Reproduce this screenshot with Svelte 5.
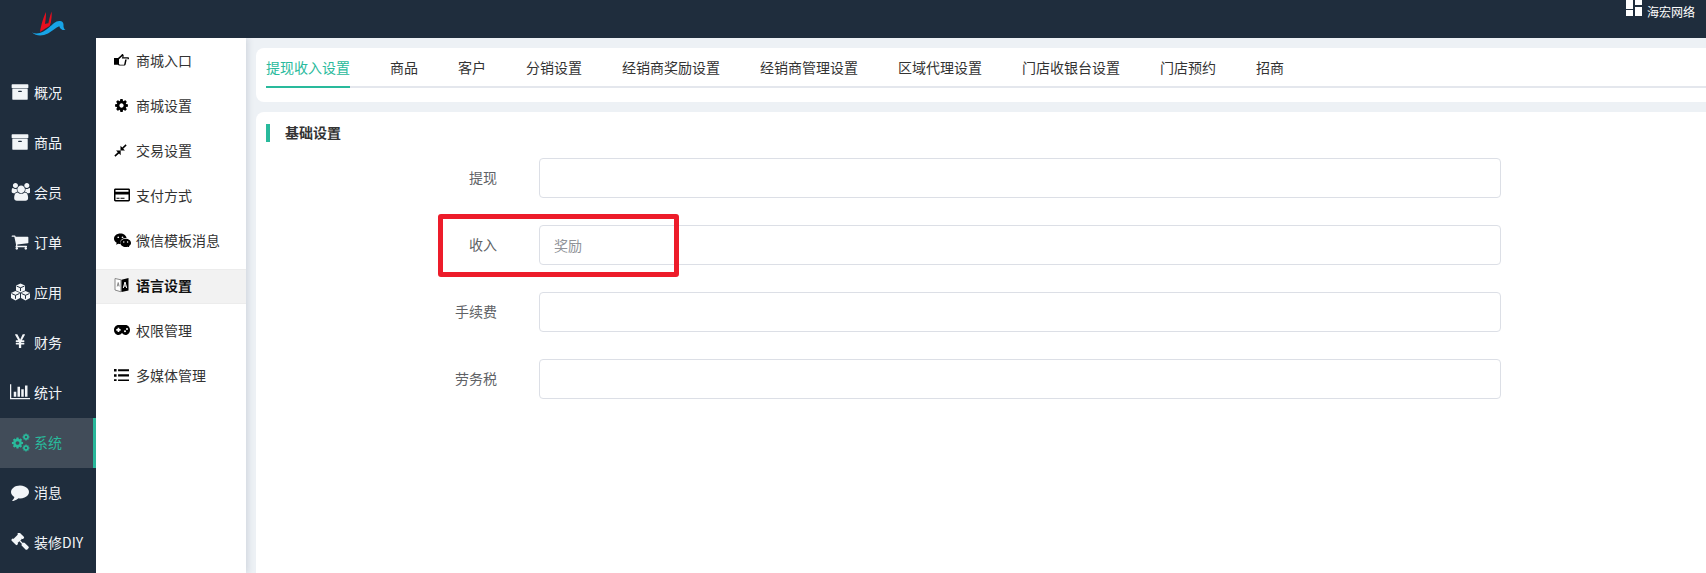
<script>
  const P = {
    archive: { vb: '0 0 1792 1792', d: 'M1088 832q0-26-19-45t-45-19h-256q-26 0-45 19t-19 45 19 45 45 19h256q26 0 45-19t19-45zm576-192v960q0 26-19 45t-45 19h-1408q-26 0-45-19t-19-45v-960q0-26 19-45t45-19h1408q26 0 45 19t19 45zm64-448v256q0 26-19 45t-45 19h-1536q-26 0-45-19t-19-45v-256q0-26 19-45t45-19h1536q26 0 45 19t19 45z' },
    users: { vb: '0 0 1920 1792', d: 'M657 896q-162 5-265 128h-134q-82 0-138-40.5t-56-118.5q0-353 124-353 6 0 43.5 21t97.5 42.5 119 21.5q67 0 133-23-5 37-5 66 0 139 81 256zm1071 637q0 120-73 189.5t-194 69.5h-874q-121 0-194-69.5t-73-189.5q0-53 3.5-103.5t14-109 26.5-108.5 43-97.5 62-81 85.5-53.5 111.5-20q10 0 43 21.5t73 48 107 48 135 21.5 135-21.5 107-48 73-48 43-21.5q61 0 111.5 20t85.5 53.5 62 81 43 97.5 26.5 108.5 14 109 3.5 103.5zm-1024-1277q0 106-75 181t-181 75-181-75-75-181 75-181 181-75 181 75 75 181zm704 384q0 159-112.5 271.5t-271.5 112.5-271.5-112.5-112.5-271.5 112.5-271.5 271.5-112.5 271.5 112.5 112.5 271.5zm576 225q0 78-56 118.5t-138 40.5h-134q-103-123-265-128 81-117 81-256 0-29-5-66 66 23 133 23 59 0 119-21.5t97.5-42.5 43.5-21q124 0 124 353zm-128-609q0 106-75 181t-181 75-181-75-75-181 75-181 181-75 181 75 75 181z' },
    cart: { vb: '0 0 1792 1792', d: 'M704 1536q0 52-38 90t-90 38-90-38-38-90 38-90 90-38 90 38 38 90zm896 0q0 52-38 90t-90 38-90-38-38-90 38-90 90-38 90 38 38 90zm128-1088v512q0 24-16.5 42.5t-40.5 21.5l-1044 122q13 60 13 70 0 16-24 64h920q26 0 45 19t19 45-19 45-45 19h-1024q-26 0-45-19t-19-45q0-11 8-31.5t16-36 21.5-40 15.5-29.5l-177-823h-204q-26 0-45-19t-19-45 19-45 45-19h256q16 0 28.5 6.5t19.5 15.5 13 24.5 8 26 5.5 29.5 4.5 26h1201q26 0 45 19t19 45z' },
    yen: { vb: '0 0 1025 1792', d: 'M603 1536h-172q-13 0-22.5-9t-9.5-23v-330h-288q-13 0-22.5-9t-9.5-23v-103q0-13 9.5-22.5t22.5-9.5h288v-85h-288q-13 0-22.5-9t-9.5-23v-104q0-13 9.5-22.5t22.5-9.5h214l-321-578q-8-16 0-32 10-16 28-16h194q19 0 29 18l215 425q19 38 56 125 10-24 30.5-68t27.5-61l191-420q8-19 29-19h191q17 0 27 16 9 14 1 31l-313 579h215q13 0 22.5 9.5t9.5 22.5v104q0 14-9.5 23t-22.5 9h-290v85h290q13 0 22.5 9.5t9.5 22.5v103q0 14-9.5 23t-22.5 9h-290v330q0 13-9.5 22.5t-22.5 9.5z' },
    chart: { vb: '0 0 2048 1792', d: 'M640 896v512h-256v-512h256zm384-512v1024h-256v-1024h256zm1024 1152v128h-2048v-1536h128v1408h1920zm-640-896v768h-256v-768h256zm384-384v1152h-256v-1152h256z' },
    comment: { vb: '0 0 1792 1792', d: 'M1792 896q0 174-120 321.5t-326 233-450 85.5q-70 0-145-8-198 175-460 242-49 14-114 22-17 2-30.5-9t-17.5-29v-1q-3-4-.5-12t2-10 4.5-9.5l6-9 7-8.5 8-9q7-8 31-34.5t34.5-38 31-39.5 32.5-51 27-59 26-76q-157-89-247.5-220t-90.5-281q0-130 71-248.5t191-204.5 286-136.5 348-50.5q244 0 450 85.5t326 233 120 321.5z' },
    gavel: { vb: '0 0 1792 1792', d: 'M1771 1440q0 53-37 90l-107 108q-39 37-91 37-53 0-90-37l-363-364q-38-36-38-90 0-53 43-96l-256-256-126 126q-14 14-34 14t-34-14q2 2 12.5 12t12.5 13 10 11.5 10 13.5 6 13.5 5.5 16.5 1.5 18q0 38-28 68-3 3-16.5 18t-19 20.5-18.5 16.5-22 15.5-22 9-26 4.5q-40 0-68-28l-408-408q-28-28-28-68 0-13 4.5-26t9-22 15.5-22 16.5-18.5 20.5-19 18-16.5q30-28 68-28 10 0 18 1.5t16.5 5.5 13.5 6 13.5 10 11.5 10 13 12.5 12 12.5q-14-14-14-34t14-34l348-348q14-14 34-14t34 14q-2-2-12.5-12t-12.5-13-10-11.5-10-13.5-6-13.5-5.5-16.5-1.5-18q0-38 28-68 3-3 16.5-18t19-20.5 18.5-16.5 22-15.5 22-9 26-4.5q40 0 68 28l408 408q28 28 28 68 0 13-4.5 26t-9 22-15.5 22-16.5 18.5-20.5 19-18 16.5q-30 28-68 28-10 0-18-1.5t-16.5-5.5-13.5-6-13.5-10-11.5-10-13-12.5-12-12.5q14 14 14 34t-14 34l-126 126 256 256q43-43 96-43 52 0 91 37l363 363q37 39 37 91z' },
    cog: { vb: '0 0 1792 1792', d: 'M1152 896q0-106-75-181t-181-75-181 75-75 181 75 181 181 75 181-75 75-181zm512-109v222q0 12-8 23t-20 13l-185 28q-19 54-39 91 35 50 107 138 10 12 10 25t-9 23q-27 37-99 108t-94 71q-12 0-26-9l-138-108q-44 23-91 38-16 136-29 186-7 28-36 28h-222q-14 0-24.5-8.5t-11.5-21.5l-28-184q-49-16-90-37l-141 107q-10 9-25 9-14 0-25-11-126-114-165-168-7-10-7-23 0-12 8-23 15-21 51-66.5t54-70.5q-27-50-41-99l-183-27q-13-2-21-12.5t-8-23.5v-222q0-12 8-23t19-13l186-28q14-46 39-92-40-57-107-138-10-12-10-24 0-10 9-23 26-36 98.5-107.5t94.5-71.5q13 0 26 10l138 107q44-23 91-38 16-136 29-186 7-28 36-28h222q14 0 24.5 8.5t11.5 21.5l28 184q49 16 90 37l142-107q9-9 24-9 13 0 25 10 129 119 165 170 7 8 7 22 0 12-8 23-15 21-51 66.5t-54 70.5q26 50 41 98l183 28q13 2 21 12.5t8 23.5z' },
    hand: { vb: '0 0 15 12', d: 'M0 4h4l2.800-2.400C7.400 1 7.800.600 8 0c.9 0 1.700.7 1.700 1.700 0 .6-.2 1.100-.4 1.600H14c.6 0 1 .5 1 1s-.4 1.100-1 1.100h-1.300l-1 4.900c-.2.800-.7 1.300-1.500 1.300H6c-.8 0-1.500-.3-2-.9H0zM5 5.200v4.900c.3.4.6.6 1 .6h4.100l1.100-5.300h2.500v-.8H7.800l.6-1.700c.1-.4.1-.7-.1-1C7.800 2.500 6 4.200 5 5.200z' },
    compress: { vb: '0 0 14 14', d: 'M1.500 13.600L.4 12.500l3.700-3.700L2.200 7h5v5l-1.800-1.900zM7 2l1.900 1.800L12.500.4l1.100 1.100L9.900 5.100l1.900 1.900H7z' },
    card: { vb: '0 0 16 14', d: 'M1.400 0.500h13.200c.8 0 1.400.6 1.400 1.400v10.200c0 .8-.6 1.400-1.400 1.400H1.400C.6 13.500 0 12.900 0 12.100V1.900C0 1.100.6.500 1.400.500zM1.500 2v1.800h13V2zM1.500 6.500V12h13V6.500zM2.500 9.700h3v1.100h-3zM6.500 9.700h4v1.100h-4z' },
    wechat: { vb: '0 0 16 14', d: 'M6 0.500c3 0 5.500 1.800 5.800 4.200C8.700 4.500 5.800 6.500 5.800 9.100c0 .4.100.8.200 1.200-.7 0-1.300-.1-1.900-.3L2 11l.5-1.800C1 8.300 0 6.900 0 5.300 0 2.600 2.700.500 6 .500zM4 3.200a.8.8 0 1 0 0 1.600.8.8 0 0 0 0-1.600zM8 3.200a.8.8 0 1 0 0 1.600.8.8 0 0 0 0-1.600zM11 5.500c2.700 0 5 1.700 5 3.800 0 1.200-.8 2.300-1.900 3l.4 1.500-1.700-.9c-.6.2-1.200.2-1.800.2-2.700 0-5-1.700-5-3.800s2.300-3.800 5-3.800zM9.200 7.800a.7.7 0 1 0 0 1.400.7.7 0 0 0 0-1.400zM12.800 7.800a.7.7 0 1 0 0 1.400.7.700 0 0 0 0-1.400z' },
    gamepad: { vb: '0 0 16 10', d: 'M4.500 0h7C14 0 16 2.200 16 5s-2 5-4.500 5c-1.400 0-2.400-.7-3.100-1.700H7.600C6.900 9.300 5.900 10 4.500 10 2 10 0 7.800 0 5s2-5 4.500-5zM3.600 2.800v1.300H2.300v1.700h1.300v1.300h1.700V5.800h1.300V4.100H5.300V2.800zM11 5.300a1 1 0 1 0 0 2 1 1 0 0 0 0-2zM13 2.900a1 1 0 1 0 0 2 1 1 0 0 0 0-2z' },
    list: { vb: '0 0 14 12', d: 'M0 0h2.400v2.400H0zM0 4.800h2.400v2.400H0zM0 9.600h2.400V12H0zM3.800 .2H14v2H3.800zM3.800 5H14v2H3.800zM3.800 9.800H14v2H3.800z' }
  };

  const mainNav = [
    { t: '概况', i: 'archive', w: 18 },
    { t: '商品', i: 'archive', w: 18 },
    { t: '会员', i: 'users', w: 19 },
    { t: '订单', i: 'cart', w: 18 },
    { t: '应用', i: 'cubes', w: 21 },
    { t: '财务', i: 'yen', w: 10 },
    { t: '统计', i: 'chart', w: 20 },
    { t: '系统', i: 'cogs', w: 19, active: true },
    { t: '消息', i: 'comment', w: 18 },
    { t: '装修DIY', i: 'gavel', w: 18 }
  ];
  const subNav = [
    { t: '商城入口', i: 'hand', w: 15 },
    { t: '商城设置', i: 'cog', w: 15 },
    { t: '交易设置', i: 'compress', w: 13 },
    { t: '支付方式', i: 'card', w: 16 },
    { t: '微信模板消息', i: 'wechat', w: 17 },
    { t: '语言设置', i: 'language', w: 15, active: true },
    { t: '权限管理', i: 'gamepad', w: 16 },
    { t: '多媒体管理', i: 'list', w: 15 }
  ];
  const tabs = ['提现收入设置', '商品', '客户', '分销设置', '经销商奖励设置', '经销商管理设置', '区域代理设置', '门店收银台设置', '门店预约', '招商'];
  const fields = [
    { l: '提现', p: '' },
    { l: '收入', p: '奖励' },
    { l: '手续费', p: '' },
    { l: '劳务税', p: '' }
  ];
  const cubeFaces = [
    'M10.500 .5L15 2.500v5L10.500 9.500 6 7.500v-5z',
    'M5.500 8L10 10v5l-4.500 2.500L1 15v-5z',
    'M15.500 8L20 10v5l-4.500 2.500L11 15v-5z'
  ];
  const cubeLines = 'M6.500 3l4 1.800 4-1.800M10.500 4.800V8M1.500 10.500l4 1.800 4-1.800M5.500 12.300v3.500M11.500 10.500l4 1.800 4-1.800M15.500 12.300v3.500';
</script>

{#snippet icon(name, w)}
  {#if name === 'cogs'}
    <svg class="ic" width={w} height={w} viewBox="0 0 19 19" fill="currentColor" aria-hidden="true">
      <svg x="0" y="3.500" width="13" height="13" viewBox="0 0 1792 1792"><path d={P.cog.d} /></svg>
      <svg x="11" y="0" width="8" height="8" viewBox="0 0 1792 1792"><path d={P.cog.d} /></svg>
      <svg x="11" y="11" width="8" height="8" viewBox="0 0 1792 1792"><path d={P.cog.d} /></svg>
    </svg>
  {:else if name === 'cubes'}
    <svg class="ic" width={w} height="18" viewBox="0 0 21 18" fill="currentColor" aria-hidden="true">
      {#each cubeFaces as f}<path d={f} />{/each}
      <path d={cubeLines} fill="none" stroke="#1f2d3d" stroke-width="1" />
    </svg>
  {:else if name === 'language'}
    <svg class="ic" width={w} viewBox="0 0 15 16" aria-hidden="true">
      <path d="M1 1.500l6 1.300v12L1 13z" fill="#fff" stroke="#888" stroke-width="1" />
      <path d="M3.200 9.500l1-4 1 4M3.500 8h1.500" fill="none" stroke="#777" stroke-width=".8" />
      <path d="M7.500 2.800L14.500 1v12.500l-7 1.500z" fill="#000" />
      <path d="M9.300 11l1.700-6 1.700 6M9.900 9h2.200" fill="none" stroke="#fff" stroke-width="1" />
    </svg>
  {:else}
    <svg class="ic" width={w} viewBox={P[name].vb} fill="currentColor" aria-hidden="true"><path d={P[name].d} fill-rule="evenodd" /></svg>
  {/if}
{/snippet}

<div class="page">
  <header class="top">
    <div class="logo">
      <svg width="34" height="26" viewBox="0 0 34 26" aria-hidden="true">
        <path d="M8 21C9 14 11.500 6 14 1c.2 5-.6 9-1 12 1-.4 2.400-.6 3.400-.8C17 9 18 5 19.500.500c.6 4-.2 8-.6 11l-1.300 3.500c-2.500 1.300-6.500 4-9.600 6z" fill="#e60f1e" />
        <path d="M0 21.500c6 2.500 12-.5 17-5 4-3.500 7-7 11-6.500 2 .2 3.500 1.500 3.500 3.500-.2 3 .500 4.500 2 5.500-3 .5-5.500-1-6.200-3.800C24 16.500 20 20 16 22.500 10 25.500 4 25 0 21.500z" fill="#17a3e6" />
      </svg>
    </div>
    <div class="user">
      <svg class="panes" width="16" height="16" viewBox="0 0 16 16" fill="#fff" aria-hidden="true">
        <path d="M0 0h7v9H0zM9 0h7v5H9zM0 10h7v6H0zM9 7h7v9H9z" />
      </svg>
      <span>海宏网络</span>
    </div>
  </header>

  <div class="body">
    <nav class="main-nav">
      {#each mainNav as n}
        <div class="main-item" class:active={n.active}>
          <span class="main-ic">{@render icon(n.i, n.w)}</span>
          <span>{n.t}</span>
        </div>
      {/each}
    </nav>

    <aside class="sub-nav">
      {#each subNav as n}
        <div class="sub-item" class:active={n.active}>
          <span class="sub-ic">{@render icon(n.i, n.w)}</span>
          <span>{n.t}</span>
        </div>
      {/each}
    </aside>

    <main class="content">
      <section class="card tabs-card">
        <div class="tabs">
          {#each tabs as t, i}
            <span class="tab" class:on={i === 0}>{t}</span>
          {/each}
        </div>
      </section>
      <section class="card form-card">
        <h2 class="title">基础设置</h2>
        <form class="form">
          {#each fields as f}
            <div class="row">
              <label class="lab" for={f.l}>{f.l}</label>
              <input id={f.l} class="inp" placeholder={f.p} />
            </div>
          {/each}
        </form>
      </section>
      <div class="mark"></div>
    </main>
  </div>
</div>

<style>
  :global(body) {
    margin: 0;
    background: #edf1f5;
  }
  .page {
    width: 1706px;
    height: 573px;
    overflow: hidden;
    display: flex;
    flex-direction: column;
    font-family: "Noto Sans CJK SC", "Liberation Sans", sans-serif;
    font-size: 14px;
    color: #333;
  }
  .top {
    flex: 0 0 38px;
    background: #1f2d3d;
    display: flex;
    justify-content: space-between;
    position: relative;
    z-index: 3;
  }
  .logo {
    padding: 11px 0 0 32px;
    line-height: 0;
  }
  .user {
    display: flex;
    align-items: flex-start;
    gap: 5px;
    padding-right: 11px;
    color: #fff;
    font-size: 12px;
    line-height: 24px;
  }
  .panes {
    display: block;
  }
  .body {
    flex: 1;
    display: flex;
    min-height: 0;
  }
  .main-nav {
    flex: 0 0 96px;
    background: #1f2d3d;
    padding-top: 30px;
    color: #f2f5f8;
  }
  .main-item {
    height: 50px;
    display: flex;
    align-items: center;
    box-sizing: border-box;
    padding-bottom: 2px;
  }
  .main-item.active {
    background: #414c59;
    border-right: 3px solid #29ba9c;
    color: #29ba9c;
  }
  .main-ic {
    flex: 0 0 34px;
    display: flex;
    justify-content: center;
    padding: 0 0 0 6px;
    box-sizing: border-box;
  }
  .ic {
    display: block;
  }
  .sub-nav {
    flex: 0 0 150px;
    background: #fff;
    padding-top: 6px;
    box-shadow: 2px 0 6px rgba(40, 60, 90, 0.14);
    position: relative;
    z-index: 2;
  }
  .sub-item {
    height: 35px;
    margin-bottom: 10px;
    display: flex;
    align-items: center;
    padding: 0 0 4px 18px;
    color: #333;
    box-sizing: border-box;
  }
  .sub-item.active {
    background: #f2f2f2;
    border-top: 1px solid #ececec;
    border-bottom: 1px solid #ececec;
    font-weight: 700;
    color: #111;
  }
  .sub-ic {
    flex: 0 0 22px;
    display: flex;
    color: #000;
    margin-top: 1px;
  }
  .content {
    flex: 1;
    min-width: 0;
    padding: 10px 0 0 10px;
    position: relative;
    overflow: hidden;
  }
  .card {
    background: #fff;
    border-radius: 8px 0 0 8px;
  }
  .tabs-card {
    height: 54px;
    margin-bottom: 10px;
    padding-left: 10px;
    box-sizing: border-box;
  }
  .tabs {
    height: 40px;
    box-sizing: border-box;
    display: flex;
    gap: 40px;
    border-bottom: 2px solid #e4e7ed;
  }
  .tab {
    height: 40px;
    box-sizing: border-box;
    line-height: 38px;
    color: #333;
    flex: none;
  }
  .tab.on {
    color: #29ba9c;
    border-bottom: 2px solid #29ba9c;
  }
  .form-card {
    height: 500px;
    padding: 12px 0 0 10px;
    box-sizing: border-box;
    border-radius: 8px 0 0 0;
  }
  .title {
    margin: 0;
    height: 18px;
    line-height: 16px;
    border-left: 4px solid #29ba9c;
    padding-left: 15px;
    font-size: 14px;
    font-weight: 700;
    color: #333;
  }
  .form {
    padding: 16px 0 0 0;
  }
  .row {
    display: flex;
    align-items: center;
    margin-bottom: 27px;
  }
  .lab {
    flex: 0 0 231px;
    text-align: right;
    color: #606266;
    margin-right: 42px;
    padding-bottom: 2px;
  }
  .inp {
    width: 962px;
    height: 40px;
    box-sizing: border-box;
    border: 1px solid #dcdfe6;
    border-radius: 4px;
    padding: 0 14px;
    font: inherit;
    outline: none;
    background: #fff;
  }
  .inp::placeholder {
    color: #909399;
    opacity: 1;
  }
  .mark {
    position: absolute;
    left: 192px;
    top: 176px;
    width: 241px;
    height: 63px;
    box-sizing: border-box;
    border: 5px solid #ed1c2a;
    border-radius: 3px;
    pointer-events: none;
  }
</style>
